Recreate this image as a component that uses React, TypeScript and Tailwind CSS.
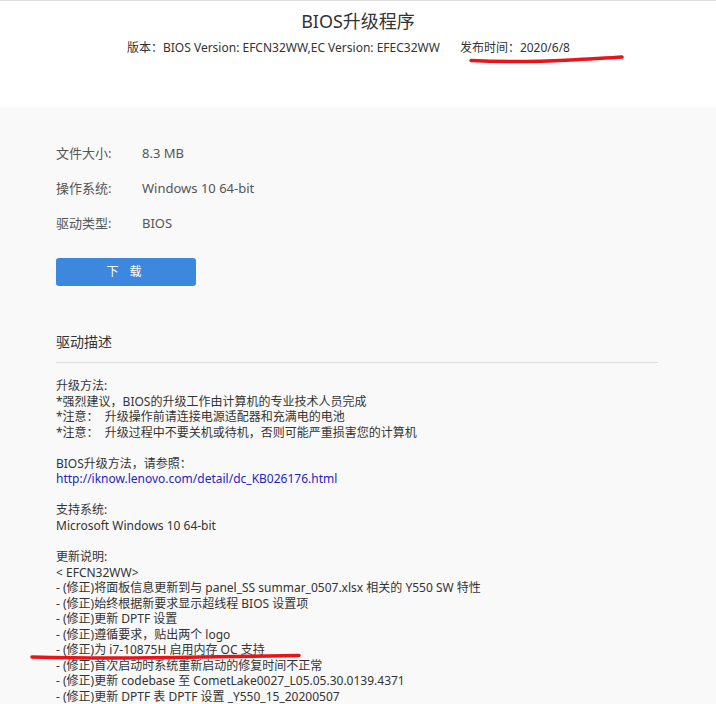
import React from "react";

const font = { fontFamily: '"Noto Sans", "Noto Sans CJK SC", sans-serif' };

const lines: { text: string; link?: boolean }[] = [
  { text: "升级方法:" },
  { text: "*强烈建议，BIOS的升级工作由计算机的专业技术人员完成" },
  { text: "*注意：  升级操作前请连接电源适配器和充满电的电池" },
  { text: "*注意：  升级过程中不要关机或待机，否则可能严重损害您的计算机" },
  { text: "" },
  { text: "BIOS升级方法，请参照：" },
  { text: "http://iknow.lenovo.com/detail/dc_KB026176.html", link: true },
  { text: "" },
  { text: "支持系统:" },
  { text: "Microsoft Windows 10 64-bit" },
  { text: "" },
  { text: "更新说明:" },
  { text: "< EFCN32WW>" },
  { text: "- (修正)将面板信息更新到与 panel_SS summar_0507.xlsx 相关的 Y550 SW 特性" },
  { text: "- (修正)始终根据新要求显示超线程 BIOS 设置项" },
  { text: "- (修正)更新 DPTF 设置" },
  { text: "- (修正)遵循要求，贴出两个 logo" },
  { text: "- (修正)为 i7-10875H 启用内存 OC 支持" },
  { text: "- (修正)首次启动时系统重新启动的修复时间不正常" },
  { text: "- (修正)更新 codebase 至 CometLake0027_L05.05.30.0139.4371" },
  { text: "- (修正)更新 DPTF 表 DPTF 设置 _Y550_15_20200507" },
];

const App = () => {
  return (
    <div className="relative h-[704px] overflow-hidden bg-white text-[#333]" style={font}>
      {/* Header */}
      <div className="border-t border-[#dcdcdc] h-[107px] flex flex-col items-center pt-[6px]">
        <h1 className="text-[18px] leading-[28px] text-[#333]">BIOS升级程序</h1>
        <div className="flex text-[12px] leading-[20px] mt-[3px] gap-[20px] mr-[19px]">
          <span>版本：BIOS Version: EFCN32WW,EC Version: EFEC32WW</span>
          <span>发布时间：2020/6/8</span>
        </div>
      </div>

      {/* Panel */}
      <div className="bg-[#f9f9f9] px-[56px] pt-[29px] pb-10">
        <div className="text-[13px] text-[#555]">
          {[
            ["文件大小:", "8.3 MB"],
            ["操作系统:", "Windows 10 64-bit"],
            ["驱动类型:", "BIOS"],
          ].map(([k, v]) => (
            <div key={k} className="flex h-[35px] items-center">
              <span className="w-[86px]">{k}</span>
              <span>{v}</span>
            </div>
          ))}
        </div>
        <button className="mt-[17px] w-[140px] h-[28px] rounded-[3px] bg-[#3b88de] text-white text-[12px] tracking-[4px]">
          下 载
        </button>

        <h2 className="mt-[46px] text-[14px] leading-[20px] text-[#333]">驱动描述</h2>
        <div className="mt-[10px] border-b border-[#dcdcdc] mr-[2px]" />

        <div className="mt-[15px] text-[12px] leading-[15.55px] text-[#333]">
          {lines.map((l, i) =>
            l.text === "" ? (
              <div key={i} className="h-[15.55px]" />
            ) : (
              <div key={i} className={l.link ? "text-[#2424c8] whitespace-pre" : "whitespace-pre"}>
                {l.text}
              </div>
            )
          )}
        </div>
      </div>

      {/* hand-drawn red marks */}
      <svg className="absolute left-0 top-0 pointer-events-none" width="716" height="704">
        <path
          d="M471 60.5 C 500 62, 540 61.5, 570 60 C 595 58.5, 610 58, 622 57"
          stroke="#e8141a"
          strokeWidth="3.5"
          fill="none"
          strokeLinecap="round"
        />
        <path
          d="M32 657 C 90 658.5, 150 658, 200 657 C 250 656, 280 656, 299 655.5"
          stroke="#e8141a"
          strokeWidth="3.5"
          fill="none"
          strokeLinecap="round"
        />
      </svg>
    </div>
  );
};

export default App;
